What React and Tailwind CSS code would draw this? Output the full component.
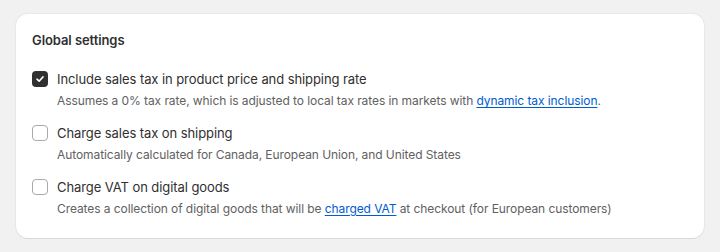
import { useState } from 'react';

const items = [
  {
    id: 'include',
    label: 'Include sales tax in product price and shipping rate',
    checked: true,
    desc: (
      <>
        Assumes a 0% tax rate, which is adjusted to local tax rates in markets with{' '}
        <a href="#" className="text-[#005bd3] underline underline-offset-2">dynamic tax inclusion</a>.
      </>
    ),
  },
  {
    id: 'shipping',
    label: 'Charge sales tax on shipping',
    checked: false,
    desc: 'Automatically calculated for Canada, European Union, and United States',
  },
  {
    id: 'vat',
    label: 'Charge VAT on digital goods',
    checked: false,
    desc: (
      <>
        Creates a collection of digital goods that will be{' '}
        <a href="#" className="text-[#005bd3] underline underline-offset-2">charged VAT</a> at checkout (for European customers)
      </>
    ),
  },
];

function Checkbox({ checked, onChange }) {
  return (
    <button
      type="button"
      onClick={onChange}
      className={
        checked
          ? 'mt-[2px] flex h-4 w-4 shrink-0 items-center justify-center rounded-[4px] bg-[#303030]'
          : 'mt-[2px] flex h-4 w-4 shrink-0 items-center justify-center rounded-[4px] border border-[#a8a8a8] bg-white'
      }
    >
      {checked && (
        <svg width="10" height="10" viewBox="0 0 10 10" fill="none">
          <path d="M2 5.2 4.1 7.2 8 2.9" stroke="white" strokeWidth="1.6" strokeLinecap="round" strokeLinejoin="round" />
        </svg>
      )}
    </button>
  );
}

export default function App() {
  const [state, setState] = useState(() => Object.fromEntries(items.map((i) => [i.id, i.checked])));

  return (
    <div className="min-h-[252px] bg-[#f1f1f1] px-4 pt-[14px] pb-[14px] font-['Inter',sans-serif] text-[13px] leading-5 tracking-[-0.08px]">
      <div className="rounded-xl bg-white px-4 pt-4 pb-[21px] shadow-[0_1px_0_0_rgba(26,26,26,0.07),0_0_0_1px_rgba(26,26,26,0.04)]">
        <h2 className="text-[13px] font-semibold leading-5 text-[#303030]">Global settings</h2>
        <div className="mt-[19px] flex flex-col gap-[14px]">
          {items.map((item) => (
            <div key={item.id} className="flex gap-[9px]">
              <Checkbox checked={state[item.id]} onChange={() => setState((prev) => ({ ...prev, [item.id]: !prev[item.id] }))} />
              <div className="flex flex-col gap-1">
                <span className="text-[#303030]">{item.label}</span>
                <p className="text-[12px] leading-4 text-[#616161]">{item.desc}</p>
              </div>
            </div>
          ))}
        </div>
      </div>
    </div>
  );
}
